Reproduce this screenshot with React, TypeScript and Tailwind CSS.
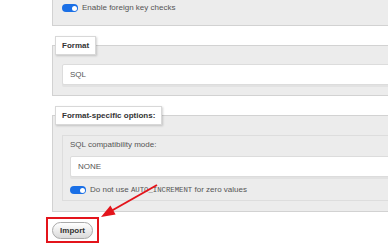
function Toggle() {
  return (
    <span className="relative inline-block h-[8px] w-[16px] shrink-0 rounded-full bg-[#1a6fe6]">
      <span className="absolute right-[1.5px] top-[1.5px] h-[5px] w-[5px] rounded-full bg-white" />
    </span>
  );
}

function Legend({ children }: { children: React.ReactNode }) {
  return (
    <div className="relative z-10 ml-[3px] inline-flex h-[19px] items-center border border-[#d8d8d8] bg-white px-[6px] font-bold text-[#333] shadow-[1px_1px_2px_rgba(0,0,0,0.18)]">
      {children}
    </div>
  );
}

function SelectBox({ value }: { value: string }) {
  return (
    <div className="flex h-[21px] items-center rounded-[2px] border border-[#dcdcdc] bg-white pl-[7px] text-[#555] shadow-[0_2px_0_#e2e2e2]">
      {value}
    </div>
  );
}

export default function App() {
  return (
    <div className="relative h-[245px] w-[388px] overflow-hidden bg-white font-['Liberation_Sans',Arial,sans-serif] text-[8px] leading-[10px] text-[#555]">
      <div className="w-[430px] pl-[52px]">
        {/* Previous fieldset (cut off at top) */}
        <div className="border-b border-l border-[#d2d2d2] bg-[#ececec] pb-[12px] pl-[9px] pt-[3px]">
          <label className="flex h-[10px] items-center gap-[4px]">
            <Toggle />
            <span>Enable foreign key checks</span>
          </label>
        </div>

        {/* Format */}
        <div className="mt-[10px]">
          <Legend>Format</Legend>
          <div className="-mt-[10px] border border-r-0 border-[#d2d2d2] bg-[#ececec] pb-[10px] pl-[9px] pt-[18px]">
            <SelectBox value="SQL" />
          </div>
        </div>

        {/* Format-specific options */}
        <div className="mt-[10px]">
          <Legend>Format-specific options:</Legend>
          <div className="-mt-[10px] border border-r-0 border-[#d2d2d2] bg-[#ececec] pb-[10px] pl-[9px] pt-[19px]">
            <div className="border border-r-0 border-[#dddddd] bg-[#ececec] pb-[5px] pl-[7px] pt-[4px]">
              <div>SQL compatibility mode:</div>
              <div className="mt-[6px]">
                <SelectBox value="NONE" />
              </div>
              <label className="mt-[8px] flex h-[10px] items-center gap-[4px]">
                <Toggle />
                <span>
                  Do not use{" "}
                  <code className="font-['Liberation_Mono',monospace] text-[7.3px]">AUTO_INCREMENT</code>{" "}
                  for zero values
                </span>
              </label>
            </div>
          </div>
        </div>

        {/* Import, highlighted */}
        <div className="-ml-[6px] mt-[5px] inline-block border-2 border-[#e3141b] px-[4px] pb-[2px] pt-[3px]">
          <button className="flex h-[17px] w-[41px] items-center justify-center rounded-[9px] border border-[#aaaaaa] bg-gradient-to-b from-white to-[#dadada] font-bold text-[#333]">
            Import
          </button>
        </div>
      </div>

      {/* Annotation arrow */}
      <svg className="pointer-events-none absolute left-0 top-0" width="388" height="245" aria-hidden="true">
        <line x1="157" y1="185" x2="112" y2="210.5" stroke="#e3141b" strokeWidth="2" />
        <polygon points="101,217 115.6,214.6 110.4,205.6" fill="#e3141b" />
      </svg>
    </div>
  );
}
